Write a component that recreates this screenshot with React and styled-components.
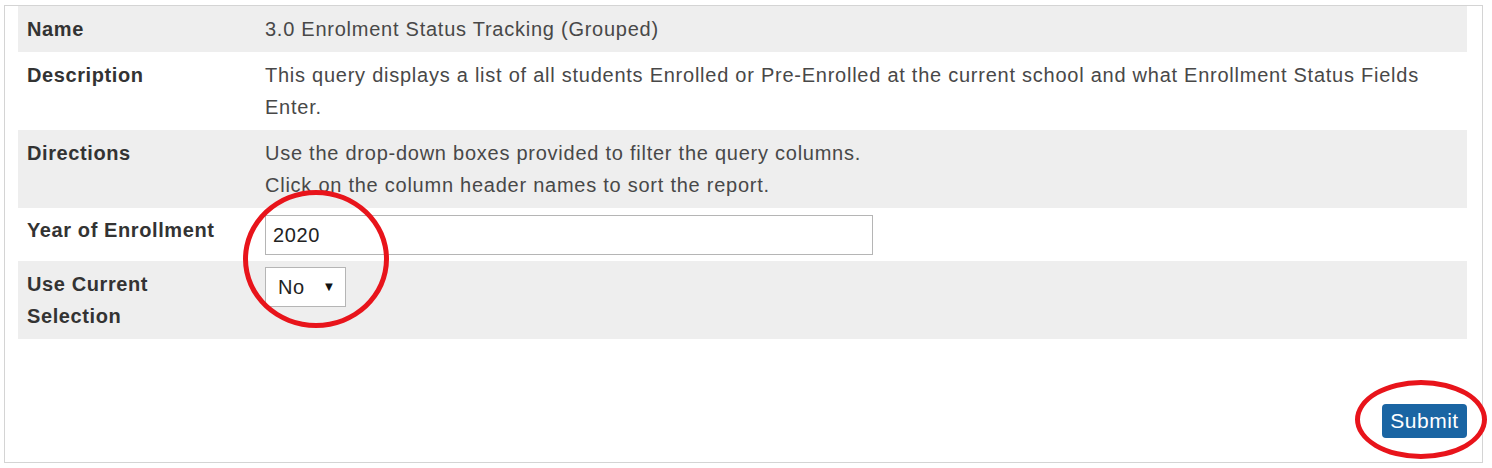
import styled, { createGlobalStyle } from "styled-components";

const Global = createGlobalStyle`
  body {
    margin: 0;
    background: #fff;
    font-family: "Liberation Sans", Arial, sans-serif;
  }
`;

const Page = styled.div`
  padding: 5px 0 0 4px;
`;

const Panel = styled.div`
  position: relative;
  box-sizing: border-box;
  width: 1479px;
  height: 458px;
  border: 1px solid #d4d4d4;
  padding: 0 15px 24px 13px;
  display: flex;
  flex-direction: column;
`;

const Table = styled.div`
  display: grid;
  grid-template-columns: 238px 1fr;
`;

const Label = styled.div`
  background: ${(p) => (p.$shade ? "#eeeeee" : "#fff")};
  padding: ${(p) => p.$pad || "7px 9px"};
  font-size: 20px;
  letter-spacing: 0.6px;
  line-height: 32px;
  font-weight: bold;
  color: #333;
`;

const Value = styled.div`
  background: ${(p) => (p.$shade ? "#eeeeee" : "#fff")};
  padding: ${(p) => p.$pad || "7px 9px"};
  font-size: 20px;
  letter-spacing: 0.75px;
  line-height: 32px;
  color: #484848;
`;

const TextInput = styled.input`
  box-sizing: border-box;
  display: block;
  width: 608px;
  height: 40px;
  border: 1px solid #b5b5b5;
  padding: 0 7px;
  font-family: "Liberation Sans", Arial, sans-serif;
  font-size: 20px;
  letter-spacing: 0.6px;
  color: #222;
  outline: none;
`;

const SelectBox = styled.div`
  position: relative;
  box-sizing: border-box;
  width: 81px;
  height: 40px;
  border: 1px solid #b5b5b5;
  background: #fff;
`;

const Select = styled.select`
  appearance: none;
  width: 100%;
  height: 100%;
  border: none;
  background: transparent;
  padding: 0 0 0 12px;
  font-family: "Liberation Sans", Arial, sans-serif;
  font-size: 20px;
  letter-spacing: 0.6px;
  color: #222;
  outline: none;
`;

const Caret = styled.span`
  position: absolute;
  right: 9px;
  top: 50%;
  transform: translateY(-55%);
  font-size: 13px;
  line-height: 1;
  color: #111;
  pointer-events: none;
`;

const Footer = styled.div`
  flex: 1;
  display: flex;
  justify-content: flex-end;
  align-items: flex-end;
`;

const SubmitButton = styled.button`
  box-sizing: border-box;
  height: 34px;
  width: 85px;
  border: none;
  border-radius: 4px;
  background: #1a65a3;
  color: #fff;
  font-family: "Liberation Sans", Arial, sans-serif;
  font-size: 21px;
  letter-spacing: 0.5px;
  padding: 0;
`;

const Ring = styled.div`
  position: absolute;
  box-sizing: border-box;
  border: 5px solid #e8141b;
  border-radius: 50%;
  pointer-events: none;
`;

export default function App() {
  return (
    <>
      <Global />
      <Page>
        <Panel>
          <Table>
            <Label $shade>Name</Label>
            <Value $shade>3.0 Enrolment Status Tracking (Grouped)</Value>

            <Label>Description</Label>
            <Value>
              This query displays a list of all students Enrolled or Pre-Enrolled at the current school and what
              Enrollment Status Fields Enter.
            </Value>

            <Label $shade>Directions</Label>
            <Value $shade>
              Use the drop-down boxes provided to filter the query columns.
              <br />
              Click on the column header names to sort the report.
            </Value>

            <Label $pad="6px 9px 7px">Year of Enrollment</Label>
            <Value $pad="7px 9px 6px">
              <TextInput defaultValue="2020" />
            </Value>

            <Label $shade>
              Use Current
              <br />
              Selection
            </Label>
            <Value $shade $pad="6px 9px">
              <SelectBox>
                <Select defaultValue="No">
                  <option>No</option>
                  <option>Yes</option>
                </Select>
                <Caret>▼</Caret>
              </SelectBox>
            </Value>
          </Table>
          <Footer>
            <SubmitButton>Submit</SubmitButton>
          </Footer>
          <Ring style={{ left: 238, top: 184, width: 146, height: 138 }} />
          <Ring style={{ left: 1350, top: 374, width: 132, height: 79 }} />
        </Panel>
      </Page>
    </>
  );
}
